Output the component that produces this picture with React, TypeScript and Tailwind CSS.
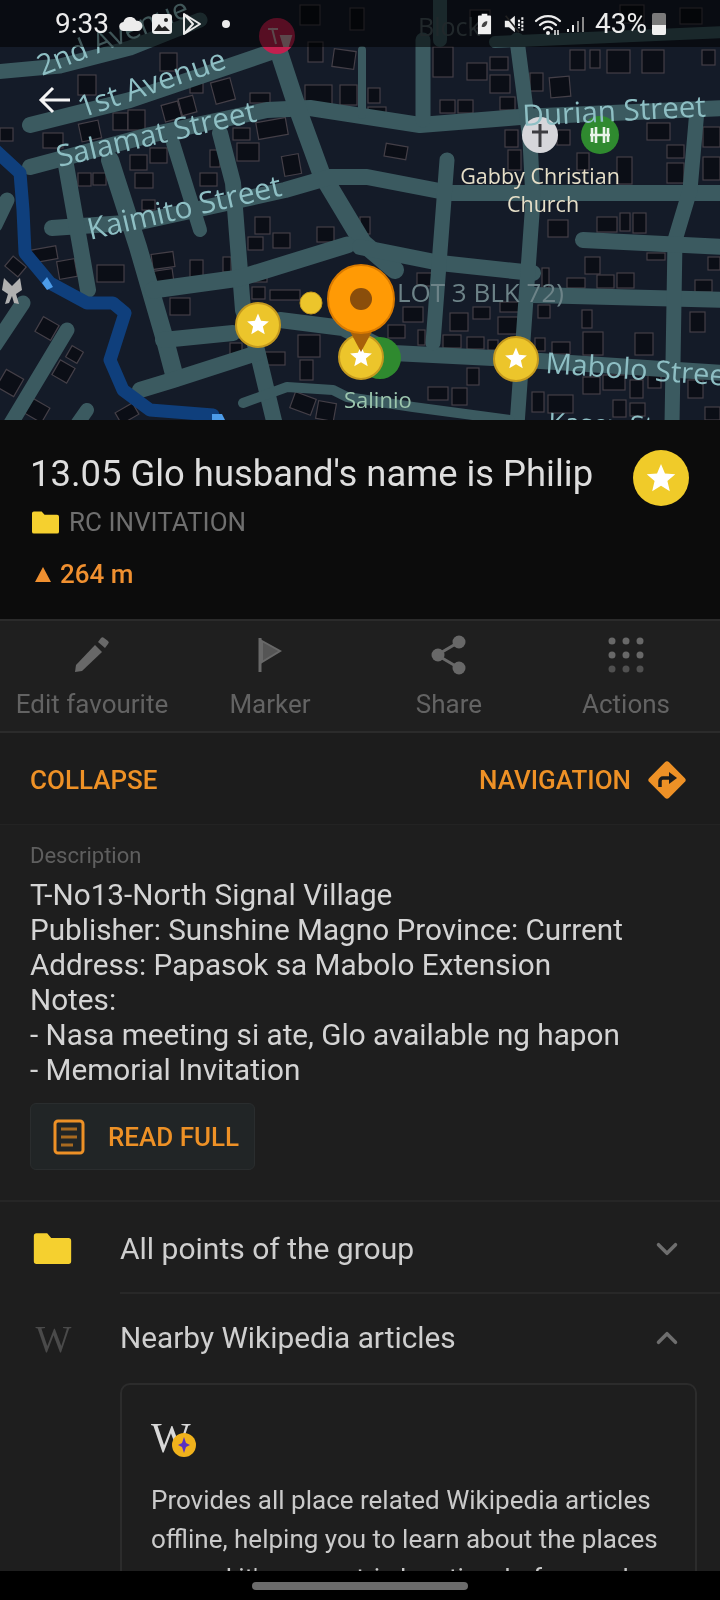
import { ChevronDown, ChevronUp } from "lucide-react";

const roads: [string, number][] = [
    ["M-5 72 L60 66 L130 48 L200 20", 15],
    ["M30 125 L130 100 L277 50", 16],
    ["M30 167 L150 135 L267 110 L310 108 L420 125 L520 117 L725 108", 16],
    ["M275 40 L298 110 L321 173 L363 243 L395 270", 18],
    ["M52 228 L140 222 L285 190 L330 177 L367 177 L450 193 L725 193", 16],
    ["M66 165 L88 290", 16],
    ["M110 160 L138 247 L165 340 L175 378", 18],
    ["M173 143 L200 230", 14],
    ["M220 133 L233 183 L243 310 L257 350 L275 425", 16],
    ["M153 290 L240 278 L347 245", 17],
    ["M163 340 L233 333", 16],
    ["M280 320 L343 328 L393 353 L493 358 L725 373", 16],
    ["M140 390 L173 380 L257 353", 16],
    ["M360 247 L440 263 L533 273", 16],
    ["M533 295 L725 300", 16],
    ["M447 160 L433 343", 15],
    ["M517 40 L530 140 L533 200 L517 425", 15],
    ["M697 110 L690 190 L675 240 L672 425", 15],
    ["M583 240 L725 247", 16],
    ["M362 50 L362 115", 8],
    ["M423 40 L423 120", 15],
    ["M67 330 L10 425", 15],
    ["M23 303 L-5 345", 15],
    ["M87 410 L73 430", 14],
    ["M7 200 L-5 225", 15],
    ["M243 403 L287 387 L333 390 L347 397 L413 407 L510 420", 10],
    ["M440 0 L440 40", 14],
    ["M495 42 L725 32", 12],
];

const buildings: [number, number, number, number, number?][] = [
    [160, 53, 17, 18], [78, 75, 18, 20], [163, 103, 17, 17, -15], [180, 97, 15, 17, -15], [113, 113, 15, 17], [128, 110, 17, 20],
    [80, 122, 20, 18, -12], [43, 133, 20, 15], [0, 128, 13, 13], [213, 80, 20, 22, -15], [233, 128, 17, 12], [257, 120, 30, 17, -10],
    [237, 143, 22, 18], [283, 155, 17, 20, -10], [130, 155, 17, 15], [150, 148, 17, 15], [135, 173, 18, 15], [78, 173, 13, 13],
    [93, 173, 13, 12], [142, 200, 13, 10], [200, 173, 17, 13], [210, 150, 10, 17], [308, 42, 15, 20], [333, 50, 22, 18, 8],
    [305, 85, 27, 22], [340, 85, 17, 20], [250, 93, 20, 10], [190, 83, 13, 10], [467, 63, 20, 17], [490, 75, 20, 18], [550, 77, 20, 20, -5],
    [530, 73, 13, 18], [440, 100, 15, 13], [458, 100, 15, 13], [500, 97, 15, 13], [433, 47, 20, 30], [490, 57, 18, 13], [368, 88, 12, 15],
    [368, 107, 18, 8], [570, 50, 15, 20], [590, 50, 10, 18], [607, 50, 23, 23], [642, 50, 22, 23], [702, 50, 13, 15], [385, 145, 22, 13, 10],
    [505, 130, 13, 17], [508, 150, 13, 20], [557, 130, 13, 15], [577, 153, 12, 17], [617, 157, 15, 27], [647, 123, 23, 17], [667, 145, 17, 13],
    [667, 163, 17, 20], [703, 127, 17, 20], [703, 157, 17, 23], [30, 248, 27, 13, -10], [7, 260, 17, 13, 40], [58, 260, 18, 18, -10],
    [97, 265, 27, 17], [152, 253, 22, 15, -8], [153, 270, 20, 12, -8], [190, 260, 13, 18], [223, 257, 8, 15], [255, 217, 15, 17], [248, 237, 15, 13],
    [273, 233, 17, 15], [317, 227, 17, 15], [170, 298, 20, 17], [252, 272, 15, 10], [252, 287, 13, 12], [270, 290, 30, 10], [38, 320, 18, 17, 30],
    [68, 348, 13, 13, 30], [55, 363, 17, 17, 30], [0, 373, 20, 20, 30], [27, 402, 20, 17, 30], [117, 407, 20, 13, -30], [230, 343, 12, 12],
    [265, 352, 20, 13], [298, 335, 22, 22], [300, 360, 13, 20], [292, 395, 22, 17, 20], [317, 402, 18, 18, 10], [548, 220, 20, 17], [597, 217, 20, 15],
    [620, 213, 10, 18], [633, 213, 13, 20], [585, 257, 15, 17], [567, 278, 18, 10], [597, 275, 17, 13], [617, 273, 17, 15], [647, 253, 18, 7],
    [708, 257, 12, 13], [695, 280, 17, 12], [542, 268, 7, 20], [538, 305, 12, 13], [582, 310, 10, 18], [690, 312, 15, 20], [450, 313, 18, 18],
    [498, 317, 20, 17], [473, 307, 17, 12], [500, 302, 20, 10], [403, 307, 20, 15], [417, 273, 15, 13], [388, 325, 17, 13], [418, 330, 7, 15],
    [443, 335, 18, 13], [467, 337, 17, 12], [488, 340, 10, 10], [535, 338, 10, 13], [552, 342, 18, 12], [583, 332, 20, 23], [635, 333, 18, 22],
    [467, 368, 12, 17], [428, 387, 20, 13], [452, 388, 15, 17], [532, 392, 12, 20], [548, 395, 25, 18], [583, 377, 17, 17], [603, 375, 22, 15],
    [630, 380, 13, 18], [648, 375, 13, 13], [613, 400, 13, 17], [630, 403, 15, 13], [688, 380, 15, 18], [705, 407, 15, 13], [360, 217, 10, 17],
    [300, 5, 20, 20], [620, 5, 24, 18], [680, 8, 22, 16], [470, 10, 20, 18], [350, 8, 14, 22],
];

const starPath = (cx: number, cy: number, r: number) => {
    const pts: string[] = [];
    for (let i = 0; i < 10; i++) {
        const a = (Math.PI / 5) * i - Math.PI / 2;
        const d = i % 2 === 0 ? r : r * 0.45;
        pts.push(`${cx + d * Math.cos(a)},${cy + d * Math.sin(a)}`);
    }
    return pts.join(" ");
};

function StarMarker({ x, y, r }: { x: number; y: number; r: number }) {
    return (
        <g>
            <circle cx={x} cy={y} r={r} fill="#ecc52b" stroke="#c4991e" strokeWidth="2" />
            <polygon points={starPath(x, y, r * 0.52)} fill="#fff" />
        </g>
    );
}

function MapLabel({ x, y, angle, size, color, children, weight = 400 }: { x: number; y: number; angle: number; size: number; color: string; children: string; weight?: number }) {
    return (
        <text x={x} y={y} transform={`rotate(${angle} ${x} ${y})`} fontSize={size} fontWeight={weight} fill={color} fontFamily="'Open Sans', 'Noto Sans', sans-serif">
            {children}
        </text>
    );
}

function MapCanvas() {
    return (
        <svg width="720" height="420" viewBox="0 0 720 420" className="block">
            <rect width="720" height="420" fill="#141b28" />
            <g fill="#0b0e16" stroke="#443f47" strokeWidth="1.2">
                {buildings.map(([x, y, w, h, rot], i) => (
                    <rect key={i} x={x} y={y} width={w} height={h} transform={rot ? `rotate(${rot} ${x + w / 2} ${y + h / 2})` : undefined} />
                ))}
            </g>
            <g fill="none" stroke="#3b5a60" strokeLinecap="round" strokeLinejoin="round">
                {roads.map(([d, w], i) => (
                    <path key={i} d={d} strokeWidth={w} />
                ))}
            </g>
            <path d="M-5 150 L20 173 L23 210 L25 253 L50 283 L87 303 L113 303 L125 313 L110 360 L123 390 L150 410 L213 415" fill="none" stroke="#0f3f7c" strokeWidth="13" strokeLinecap="round" strokeLinejoin="round" />
            <path d="M42 283 L47 277 L53 287 L47 290 Z" fill="#4c9be8" />
            <path d="M212 414 L222 414 L225 420 L212 420 Z" fill="#4c9be8" />

            <MapLabel x={42} y={76} angle={-22} size={29} color="#8ebfc4">2nd Avenue</MapLabel>
            <MapLabel x={82} y={118} angle={-19} size={30} color="#8ebfc4">1st Avenue</MapLabel>
            <MapLabel x={59} y={167} angle={-13} size={30} color="#8ebfc4">Salamat Street</MapLabel>
            <MapLabel x={90} y={240} angle={-13} size={30} color="#8ebfc4">Kaimito Street</MapLabel>
            <text x="418" y="36" fontSize="25" fill="#4b5a60" fontFamily="'Open Sans', sans-serif">Block</text>

            {/* church + gym */}
            <circle cx="540" cy="135" r="18" fill="#d6d6da" />
            <path d="M540 124 V147 M532 132 H548" stroke="#3c3c40" strokeWidth="3" />
            <circle cx="600" cy="135" r="19" fill="#2f8a2f" />
            <path d="M590 135 H610 M592 128 V142 M596 127 V143 M604 127 V143 M608 128 V142" stroke="#e8f4e8" strokeWidth="2.6" />
            <MapLabel x={523} y={126} angle={-3} size={29.5} color="#8ebfc4">Durian Street</MapLabel>
            <text x="540" y="184" textAnchor="middle" fontSize="21.5" fontWeight="500" fill="#e6dfc8" fontFamily="'Open Sans', sans-serif">Gabby Christian</text>
            <text x="543" y="212" textAnchor="middle" fontSize="21.5" fontWeight="500" fill="#e6dfc8" fontFamily="'Open Sans', sans-serif">Church</text>

            {/* red poi under status bar */}
            <circle cx="277" cy="36" r="18" fill="#c2204f" />
            <path d="M272 28 L276 44 M268 29 H278 M281 36 H291 L288 46 H284 Z" stroke="#caa0a8" strokeWidth="2" fill="#caa0a8" />

            {/* tower */}
            <path d="M4 278 L12 286 L20 278 L22 290 L16 294 L19 304 L14 303 L12 296 L9 303 L5 304 L8 294 L2 290 Z" fill="#b0b0b0" />

            <text x="397" y="302" fontSize="26" fill="#6d8388" fontFamily="'Open Sans', sans-serif">LOT 3 BLK 72)</text>
            <MapLabel x={545} y={373} angle={4} size={29} color="#8ebfc4">Mabolo Street</MapLabel>
            <MapLabel x={548} y={432} angle={2} size={27} color="#8ebfc4">Kasoy St</MapLabel>
            <text x="344" y="408" fontSize="22" fill="#9cc6ae" fontFamily="'Open Sans', sans-serif">Salinio</text>

            <circle cx="380" cy="358" r="21" fill="#2f8a2f" />
            <StarMarker x={258} y={325} r={22} />
            <StarMarker x={361} y={357} r={22} />
            <StarMarker x={516} y={359} r={22} />
            <circle cx="311" cy="303" r="11" fill="#ecc52b" stroke="#c4991e" strokeWidth="1" />

            {/* pin */}
            <path d="M347 326 L361 352 L375 326 Z" fill="#a8610a" />
            <ellipse cx="361" cy="299" rx="33" ry="34" fill="#ff9a05" stroke="#d97a00" strokeWidth="2" />
            <circle cx="361" cy="299" r="11" fill="#8a4e0b" />
        </svg>
    );
}

function StatusBar() {
    return (
        <div className="absolute top-0 left-0 w-full h-[47px] bg-black/55 flex items-center justify-between pl-[55px] pr-[54px] text-[#ececec] font-['Roboto',sans-serif] text-[28px]">
            <div className="flex items-center">
                <span className="leading-none">9:33</span>
                <svg width="24" height="14" viewBox="0 0 24 14" className="ml-[10px]"><path d="M5 14a4.5 4.5 0 0 1-.6-9 7 7 0 0 1 13-1.2A5 5 0 0 1 19 14Z" fill="#ececec" /></svg>
                <svg width="22" height="22" viewBox="0 0 22 22" className="ml-[8px]"><rect x="1" y="1" width="20" height="20" rx="3" fill="#ececec" /><circle cx="15" cy="7" r="2" fill="#222" /><path d="M3 18l5-7 3 4 3-2 5 5Z" fill="#222" /></svg>
                <svg width="22" height="24" viewBox="0 0 22 24" className="ml-[8px]"><path d="M3 2l16 10L3 22Z M3 2l9 10-9 10" fill="none" stroke="#ececec" strokeWidth="2" strokeLinejoin="round" /></svg>
                <span className="ml-[19px] w-[8px] h-[8px] rounded-full bg-[#ececec]" />
            </div>
            <div className="flex items-center">
                <svg width="15" height="24" viewBox="0 0 16 24"><path d="M5 1h6v2h3a1 1 0 0 1 1 1v18a1 1 0 0 1-1 1H2a1 1 0 0 1-1-1V4a1 1 0 0 1 1-1h3Z" fill="#f0f0f0" /><path d="M5 15c0-4 3-6 6-6 0 4-2 7-6 6Z" fill="#444" /></svg>
                <svg width="20" height="22" viewBox="0 0 24 22" className="ml-[12px]"><path d="M1 7h5l7-6v20l-7-6H1Z" fill="#ececec" /><path d="M2 1l16 20" stroke="#222" strokeWidth="2" /><path d="M18 6v10M22 3v16" stroke="#ececec" strokeWidth="2.5" strokeDasharray="3 1.5" /></svg>
                <svg width="28" height="24" viewBox="0 0 28 24" className="ml-[10px]"><path d="M2 9a17 17 0 0 1 24 0M6 13a11 11 0 0 1 16 0M10 17a5 5 0 0 1 8 0" fill="none" stroke="#ececec" strokeWidth="2.2" strokeLinecap="round" /><circle cx="14" cy="21" r="2" fill="#ececec" /><path d="M21 18v5M24 18v5" stroke="#ececec" strokeWidth="1.5" /></svg>
                <svg width="18" height="18" viewBox="0 0 18 18" className="ml-[4px]"><path d="M2 17v-3M7 17v-7M12 17V6M17 17V2" stroke="#8a8a8a" strokeWidth="2" /><path d="M2 17v-3M7 17v-7" stroke="#ececec" strokeWidth="2" /></svg>
                <span className="ml-[11px] leading-none">43%</span>
                <div className="ml-[5px] w-[14px] h-[22px] rounded-[2px] bg-[#7a7a7a] relative overflow-hidden">
                    <div className="absolute bottom-0 left-0 w-full h-[10px] bg-[#f0f0f0]" />
                </div>
            </div>
        </div>
    );
}

function FolderIcon({ className }: { className: string }) {
    return (
        <svg viewBox="0 0 28 24" className={className}>
            <path d="M0 3a2 2 0 0 1 2-2h8l3 3.5h13a2 2 0 0 1 2 2V22a2 2 0 0 1-2 2H2a2 2 0 0 1-2-2Z" fill="#f5d02f" />
        </svg>
    );
}

function ActionItem({ icon, label }: { icon: React.ReactNode; label: string }) {
    return (
        <div className="flex flex-col items-center">
            <div className="h-[40px] flex items-center justify-center">{icon}</div>
            <span className="mt-[13px] text-[26px] leading-[32px] text-[#636363]">{label}</span>
        </div>
    );
}

export default function App() {
    return (
        <div className="relative w-[720px] h-[1600px] overflow-hidden flex flex-col bg-[#1e1e1e] font-['Roboto',sans-serif] blur-[0.5px]">
            {/* Map */}
            <div className="relative h-[420px] shrink-0 overflow-hidden">
                <MapCanvas />
                <StatusBar />
                <svg width="34" height="30" viewBox="0 0 34 30" className="absolute left-[38px] top-[85px]">
                    <path d="M32 15H3M15 3L3 15l12 12" fill="none" stroke="#f5f5f5" strokeWidth="3" />
                </svg>
            </div>

            {/* Title */}
            <div className="h-[199px] shrink-0 bg-[#0c0c0c] relative pl-[30px] pt-[33px]">
                <div className="text-[36.4px] leading-[42px] text-[#dedede]">13.05 Glo husband's name is Philip</div>
                <div className="flex items-center mt-[11px]">
                    <FolderIcon className="w-[27px] h-[24px] ml-[2px]" />
                    <span className="ml-[10px] text-[26px] leading-[32px] text-[#6f6f6f]">RC INVITATION</span>
                </div>
                <div className="flex items-center mt-[20px]">
                    <svg width="16" height="15" viewBox="0 0 16 15" className="ml-[5px]"><path d="M8 0l8 15H0Z" fill="#f09030" /></svg>
                    <span className="ml-[9px] text-[26px] leading-[32px] font-medium text-[#f09030]">264 m</span>
                </div>
                <div className="absolute left-[633px] top-[30px] w-[56px] h-[56px] rounded-full bg-[#f0cb29] flex items-center justify-center">
                    <svg width="32" height="32" viewBox="0 0 32 32"><polygon points={starPath(16, 17, 15)} fill="#fff" /></svg>
                </div>
            </div>

            {/* Actions */}
            <div className="h-[114px] shrink-0 grid grid-cols-[184px_172px_186px_168px] bg-[#1f1f1f] border-t-2 border-b-2 border-[#2b2b2b] pt-[14px]">
                <ActionItem
                    label="Edit favourite"
                    icon={<svg width="40" height="40" viewBox="0 0 40 40"><path d="M3 37l1-7L23 10l7 7-20 19Z" fill="#686868" /><path d="M26 7l3-4a2 2 0 0 1 3 0l4 3a2 2 0 0 1 0 3l-3 4Z" fill="#686868" /></svg>}
                />
                <ActionItem
                    label="Marker"
                    icon={<svg width="26" height="36" viewBox="0 0 26 36"><path d="M3 1v34" stroke="#686868" strokeWidth="3" /><path d="M5 4l18 10L5 25Z" fill="#555" stroke="#686868" strokeWidth="2" /></svg>}
                />
                <ActionItem
                    label="Share"
                    icon={<svg width="36" height="40" viewBox="0 0 36 40"><path d="M28 7L6 20l22 13" fill="none" stroke="#686868" strokeWidth="3" /><circle cx="28" cy="7" r="6.5" fill="#686868" /><circle cx="7" cy="20" r="6.5" fill="#686868" /><circle cx="28" cy="33" r="6.5" fill="#686868" /></svg>}
                />
                <ActionItem
                    label="Actions"
                    icon={<svg width="36" height="36" viewBox="0 0 36 36">{[4, 18, 32].map((y) => [4, 18, 32].map((x) => <circle key={`${x}-${y}`} cx={x} cy={y} r="3.5" fill={y === 32 ? "#505050" : "#686868"} />))}</svg>}
                />
            </div>

            {/* Collapse / Navigation */}
            <div className="h-[91px] shrink-0 flex items-center justify-between pl-[30px] pr-[33px] pt-[3px] bg-[#1c1c1c] text-[26px] font-medium text-[#ee9126]">
                <span>COLLAPSE</span>
                <div className="flex items-center">
                    <span>NAVIGATION</span>
                    <svg width="40" height="40" viewBox="0 0 40 40" className="ml-[16px]">
                        <rect x="6" y="6" width="28" height="28" rx="3" transform="rotate(45 20 20)" fill="#ee9126" />
                        <path d="M13 27v-6a3 3 0 0 1 3-3h8" fill="none" stroke="#1c1c1c" strokeWidth="3.5" />
                        <path d="M22 12l8 6-8 6Z" fill="#1c1c1c" />
                    </svg>
                </div>
            </div>

            {/* Description */}
            <div className="shrink-0 h-[378px] border-b-2 border-[#262626] pl-[30px] pt-[17px] border-t border-t-[#232323]">
                <div className="text-[22px] leading-[28px] text-[#5f5f5f]">Description</div>
                <div className="mt-[7px] text-[29.7px] leading-[35px] text-[#d4d4d4]">
                    <div>T-No13-North Signal Village</div>
                    <div>Publisher: Sunshine Magno Province: Current</div>
                    <div>Address: Papasok sa Mabolo Extension</div>
                    <div>Notes:</div>
                    <div>- Nasa meeting si ate, Glo available ng hapon</div>
                    <div>- Memorial Invitation</div>
                </div>
                <div className="mt-[16px] w-[225px] h-[67px] rounded-[6px] bg-[#212526] border border-[#2a2d2e] flex items-center pl-[22px]">
                    <svg width="32" height="36" viewBox="0 0 32 36">
                        <rect x="2" y="2" width="28" height="32" rx="3" fill="none" stroke="#ee9126" strokeWidth="3" />
                        <path d="M8 10h16M8 18h16M8 26h12" stroke="#a86a20" strokeWidth="3" />
                    </svg>
                    <span className="ml-[23px] pt-[2px] text-[26px] font-medium text-[#ee9126]">READ FULL</span>
                </div>
            </div>

            {/* All points */}
            <div className="h-[92px] shrink-0 flex items-center relative">
                <FolderIcon className="ml-[33px] w-[39px] h-[32px]" />
                <div className="absolute left-[120px] right-0 bottom-0 h-[2px] bg-[#282828]" />
                <span className="ml-[48px] text-[30px] text-[#cfcfcf]">All points of the group</span>
                <ChevronDown className="absolute left-[650px] top-[30px] text-[#6e6e6e]" size={34} strokeWidth={2.5} />
            </div>

            {/* Wikipedia */}
            <div className="h-[89px] shrink-0 flex items-center relative">
                <span className="ml-[35px] w-[37px] text-center font-['Liberation_Serif',serif] text-[38px] leading-none text-[#4a4a4a]">W</span>
                <span className="ml-[48px] text-[29.8px] text-[#cfcfcf]">Nearby Wikipedia articles</span>
                <ChevronUp className="absolute left-[650px] top-[27px] text-[#6e6e6e]" size={34} strokeWidth={2.5} />
            </div>

            {/* Wikipedia card */}
            <div className="flex-1 min-h-0 overflow-hidden pl-[120px] pr-[23px]">
                <div className="h-[300px] border-2 border-[#2c2c2c] rounded-[10px] pl-[29px] pr-[20px] pt-[32px]">
                    <div className="relative w-[50px] h-[50px]">
                        <span className="absolute left-0 top-0 font-['Liberation_Serif',serif] text-[42px] leading-none text-[#d8d8d8]">W</span>
                        <div className="absolute left-[21px] top-[16px] w-[24px] h-[24px] rounded-full bg-[#f0b21c] flex items-center justify-center">
                            <svg width="12" height="16" viewBox="0 0 12 16"><path d="M6 0l2 6 4 2-4 2-2 6-2-6-4-2 4-2Z" fill="#5a2fc2" /></svg>
                        </div>
                    </div>
                    <div className="mt-[14px] text-[26px] leading-[39px] text-[#cacaca]">
                        Provides all place related Wikipedia articles offline, helping you to learn about the places around it's geometric location, before and after
                    </div>
                </div>
            </div>

            {/* Gesture bar */}
            <div className="h-[29px] shrink-0 bg-black flex items-center justify-center">
                <div className="w-[216px] h-[8px] rounded-full bg-[#6b6b6b]" />
            </div>
        </div>
    );
}
